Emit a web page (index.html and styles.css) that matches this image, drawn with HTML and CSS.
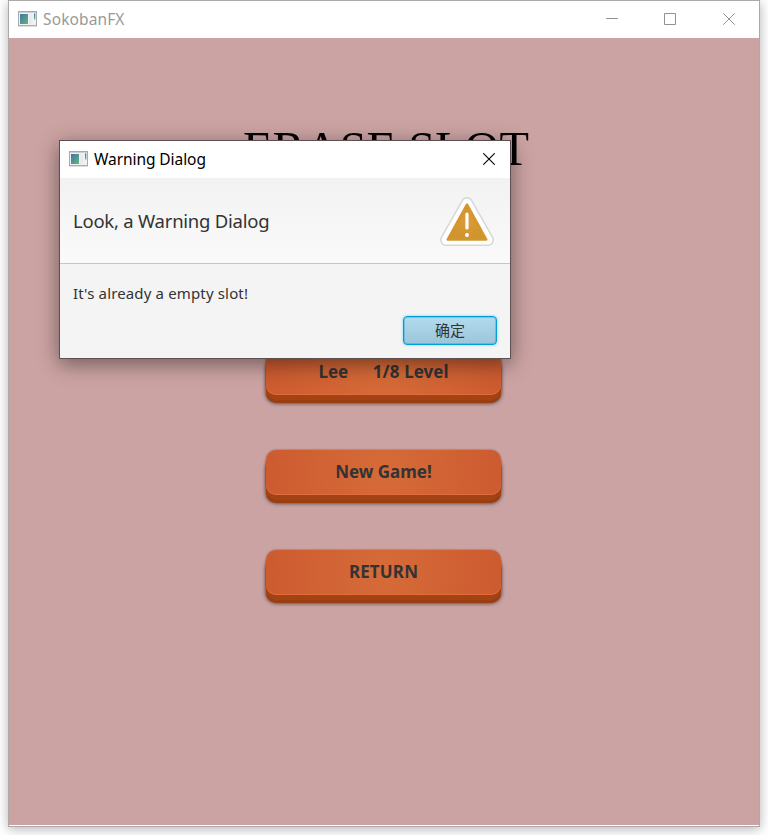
FILE: index.html
```
<!DOCTYPE html>
<html lang="en">
<head>
<meta charset="utf-8">
<title>SokobanFX</title>
<link rel="stylesheet" href="styles.css">
</head>
<body>
<svg width="0" height="0" class="defs">
  <defs>
    <linearGradient id="pane" x1="0" y1="0" x2="1" y2="1"><stop offset="0" stop-color="#4773a0"/><stop offset="1" stop-color="#5fb582"/></linearGradient>
    <linearGradient id="strip" x1="0" y1="0" x2="0" y2="1"><stop offset="0" stop-color="#3c70b4"/><stop offset="1" stop-color="#68b58d"/></linearGradient>
    <radialGradient id="amber"><stop offset="0" stop-color="#dc9b36"/><stop offset="1" stop-color="#cf942c"/></radialGradient>
    <symbol id="app" viewBox="0 0 19 16">
      <rect x=".5" y=".5" width="18" height="14" fill="#f0f1f2" stroke="#a5abb2"/>
      <path d="M1 1.5h17" stroke="#c9ced4"/>
      <path d="M0 15.4h19" stroke="#c9c9c9" stroke-width=".7"/>
      <rect x="2" y="3" width="8" height="10" fill="url(#pane)"/>
      <rect x="11" y="3" width="3.5" height="10" fill="#e9ebec"/>
      <rect x="16" y="2.5" width="1.3" height="6" fill="url(#strip)"/>
    </symbol>
  </defs>
</svg>
<main class="window">
  <header class="titlebar">
    <svg class="app-icon" width="19" height="16"><use href="#app"/></svg>
    <span class="caption caption-main">SokobanFX</span>
    <div class="controls">
      <svg width="12" height="12"><path d="M0 5.500h12" stroke="#929292"/></svg>
      <svg width="12" height="12"><path d="M.5.5h11v11H.5z" fill="none" stroke="#929292"/></svg>
      <svg width="12" height="12"><path d="M.3.3l11.400 11.400M11.700.3L.3 11.700" stroke="#929292"/></svg>
    </div>
  </header>
  <section class="scene">
    <h1>ERASE SLOT</h1>
    <button class="slot slot-save">Lee &nbsp; &nbsp; 1/8 Level</button>
    <button class="slot slot-new">New Game!</button>
    <button class="slot slot-return">RETURN</button>
  </section>
</main>
<div class="dialog" role="dialog">
  <header class="titlebar">
    <svg class="app-icon" width="19" height="16"><use href="#app"/></svg>
    <span class="caption caption-dialog">Warning Dialog</span>
    <svg class="close" width="12" height="12"><path d="M.3.3l11.400 11.400M11.700.3L.3 11.700" stroke="#000" stroke-width="1.1"/></svg>
  </header>
  <div class="head">
    <span class="head-text">Look, a Warning Dialog</span>
    <svg class="warning" width="56" height="52" viewBox="0 0 56 52">
      <path d="M28 8L7 45H49Z" fill="#d7d7d7" stroke="#d7d7d7" stroke-width="12" stroke-linejoin="round"/>
      <path d="M28 8L7 45H49Z" fill="#fff" stroke="#fff" stroke-width="9" stroke-linejoin="round"/>
      <path d="M28 9.500L8.700 44.500H47.300Z" fill="url(#amber)" stroke="#d4962f" stroke-width="2.500" stroke-linejoin="round"/>
      <path d="M28 19v14" stroke="#fff" stroke-width="3.200" stroke-linecap="round"/>
      <circle cx="28" cy="40" r="2" fill="#fff"/>
    </svg>
  </div>
  <div class="body">
    <span class="message">It's already a empty slot!</span>
    <button class="ok">确定</button>
  </div>
</div>
</body>
</html>
```

FILE: styles.css
```
* { box-sizing: border-box; }
body {
  margin: 0;
  height: 835px;
  overflow: hidden;
  background: #fff;
  font-family: "Noto Sans", "Noto Sans CJK SC", sans-serif;
}
.defs { position: absolute; }
.window {
  width: 752px;
  height: 827px;
  margin-left: 8px;
  border: 1px solid #aaa;
  background: #fff;
  box-shadow: 0 2px 11px rgba(0, 0, 0, .3);
}
.titlebar {
  height: 37px;
  display: flex;
  align-items: center;
  padding-left: 9px;
  background: #fff;
}
.app-icon { margin-top: -1px; }
.caption {
  margin: -2px 0 0 6px;
  font-size: 15.5px;
  line-height: 22px;
  white-space: nowrap;
  color: #000;
}
.caption-main { color: #999; letter-spacing: .12px; }
.caption-dialog { letter-spacing: -.07px; }
.controls {
  margin: -1px 24px 0 auto;
  display: flex;
  gap: 47px;
}
.controls svg:first-child { margin-right: -1px; }
.controls svg, .close, .app-icon, .warning { display: block; flex: none; }
.scene {
  height: 787px;
  background: #cca3a3;
  display: flex;
  flex-direction: column;
  align-items: center;
}
h1 {
  margin: 83px 0 0 4px;
  height: 229px;
  font: 400 48.3px/56px "Liberation Serif", serif;
  color: #000;
  white-space: nowrap;
}
.slot {
  width: 235px;
  height: 45px;
  margin: 0 1px 55px 0;
  padding: 0 0 2px;
  border: 0;
  border-radius: 10px;
  background: radial-gradient(circle 118px at 50% 50%, #d66b38, #cd5b30);
  box-shadow: inset 0 -1px 0 #e06d3b, 0 5px 0 #a34313, 0 8px 0 #9a3d10, 0 8px 4px rgba(0, 0, 0, .75), 0 0 2px rgba(0, 0, 0, .5);
  font: 700 17px/24px "Noto Sans", sans-serif;
  color: #333;
  white-space: nowrap;
}
.slot-save { word-spacing: .5px; }
.slot-return { letter-spacing: .15px; }
.dialog {
  position: absolute;
  left: 59px;
  top: 140px;
  width: 452px;
  height: 219px;
  border: 1px solid #5e5051;
  background: #f4f4f4;
  box-shadow: 0 5px 20px rgba(0, 0, 0, .45);
}
.close { margin: -1px 15px 0 auto; }
.head {
  height: 86px;
  padding: 0 15px 0 13px;
  display: flex;
  align-items: center;
  justify-content: space-between;
  background: linear-gradient(#f2f2f2, #fafafa);
  border-bottom: 1px solid #c6c6c6;
}
.head-text { font-size: 18.5px; letter-spacing: -.24px; color: #333; white-space: nowrap; }
.body {
  height: 94px;
  padding: 17px 13px 13px;
  display: flex;
  flex-direction: column;
}
.message { font-size: 15px; line-height: 24px; letter-spacing: .15px; color: #333; white-space: nowrap; }
.ok {
  align-self: flex-end;
  width: 94px;
  height: 29px;
  margin-top: 11px;
  padding: 0 0 2px;
  border: 1.5px solid #039ed3;
  border-radius: 4px;
  background: linear-gradient(#b2dbed, #9bc5da);
  box-shadow: 0 0 2px 1px #b5e3f3, inset 0 0 0 1px rgba(3, 158, 211, .35);
  font: 15px/22px "Noto Sans CJK SC", sans-serif;
  color: #333;
}
```
